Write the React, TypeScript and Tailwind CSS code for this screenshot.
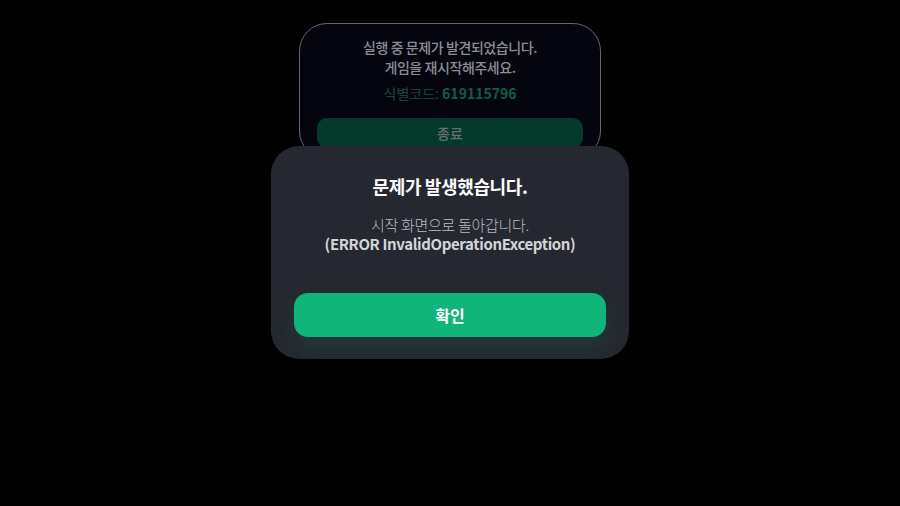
import React from 'react';

const font = { fontFamily: '"Noto Sans CJK KR", "Noto Sans", sans-serif' };

function CrashCard() {
  return (
    <div className="w-[302px] h-[136px] rounded-[28px] border border-[#666773] bg-[#05050f] pt-[13px] px-[17px] flex flex-col items-center">
      <p className="text-[14px] leading-[20px] font-medium tracking-[-0.03em] text-[#8d8d95] text-center">
        실행 중 문제가 발견되었습니다.
        <br />
        게임을 재시작해주세요.
      </p>
      <p className="mt-[6px] text-[14px] leading-[20px] text-[#1a4535]">
        식별코드: <span className="font-bold text-[#135c41]">619115796</span>
      </p>
      <button className="mt-[15px] w-full h-[30px] rounded-[10px] bg-[#033a2b] text-[14px] font-medium text-[#6b6d70]">
        종료
      </button>
    </div>
  );
}

function ErrorDialog() {
  return (
    <div className="w-[358px] h-[213px] -mt-[13px] rounded-[28px] bg-[#252830] pt-[27px] px-[23px] flex flex-col items-center">
      <h2 className="text-[18px] leading-[26px] font-bold tracking-[-0.02em] text-white">문제가 발생했습니다.</h2>
      <p className="mt-[16px] text-[15px] leading-[19px] text-center">
        <span className="font-light tracking-[-0.02em] text-[#bcbdc2]">시작 화면으로 돌아갑니다.</span>
        <br />
        <span className="font-semibold tracking-[-0.025em] text-[#d4d5d8]">(ERROR InvalidOperationException)</span>
      </p>
      <button className="mt-[40px] w-full h-[44px] rounded-[14px] bg-[#10b57a] text-[16px] font-bold text-white shadow-[0_10px_22px_rgba(16,181,122,0.12)]">
        확인
      </button>
    </div>
  );
}

export default function App() {
  return (
    <div style={font} className="w-full h-[506px] bg-black flex flex-col items-center pt-[23px]">
      <CrashCard />
      <ErrorDialog />
    </div>
  );
}
